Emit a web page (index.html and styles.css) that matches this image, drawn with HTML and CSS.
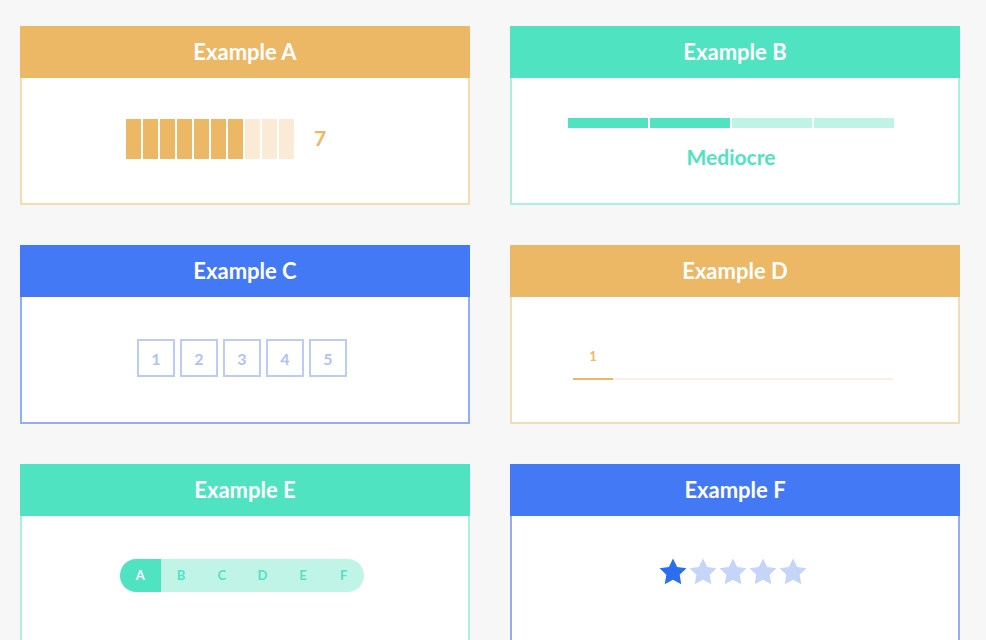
FILE: index.html
```html
<!DOCTYPE html>
<html>
<head>
  <meta charset="utf-8">
  <title>Rating examples</title>
  <link rel="stylesheet" href="styles.css">
</head>
<body>
  <div class="grid">
    <div class="card orange">
      <div class="card-head">Example A</div>
      <div class="card-body">
        <div class="bars">
          <span class="bar on"></span><span class="bar on"></span><span class="bar on"></span><span class="bar on"></span>
          <span class="bar on"></span><span class="bar on"></span><span class="bar on"></span>
          <span class="bar"></span><span class="bar"></span><span class="bar"></span>
        </div>
        <span class="bars-value">7</span>
      </div>
    </div>

    <div class="card teal">
      <div class="card-head">Example B</div>
      <div class="card-body column">
        <div class="segments">
          <span class="seg on"></span><span class="seg on"></span><span class="seg"></span><span class="seg"></span>
        </div>
        <div class="seg-label">Mediocre</div>
      </div>
    </div>

    <div class="card blue">
      <div class="card-head">Example C</div>
      <div class="card-body">
        <div class="boxes">
          <span class="box">1</span><span class="box">2</span><span class="box">3</span><span class="box">4</span><span class="box">5</span>
        </div>
      </div>
    </div>

    <div class="card orange">
      <div class="card-head">Example D</div>
      <div class="card-body">
        <div class="slider">
          <span class="slider-label">1</span>
          <div class="track"><div class="track-fill"></div></div>
        </div>
      </div>
    </div>

    <div class="card teal">
      <div class="card-head">Example E</div>
      <div class="card-body">
        <div class="pill">
          <span class="pill-item on">A</span><span class="pill-item">B</span><span class="pill-item">C</span>
          <span class="pill-item">D</span><span class="pill-item">E</span><span class="pill-item">F</span>
        </div>
      </div>
    </div>

    <div class="card blue">
      <div class="card-head">Example F</div>
      <div class="card-body">
        <div class="stars">
          <svg class="star on" viewBox="0 0 24 24"><path d="M12 1.8l3.1 6.4 7 1-5.1 4.9 1.2 7L12 17.8l-6.2 3.3 1.2-7L1.9 9.2l7-1z"/></svg>
          <svg class="star" viewBox="0 0 24 24"><path d="M12 1.8l3.1 6.4 7 1-5.1 4.9 1.2 7L12 17.8l-6.2 3.3 1.2-7L1.9 9.2l7-1z"/></svg>
          <svg class="star" viewBox="0 0 24 24"><path d="M12 1.8l3.1 6.4 7 1-5.1 4.9 1.2 7L12 17.8l-6.2 3.3 1.2-7L1.9 9.2l7-1z"/></svg>
          <svg class="star" viewBox="0 0 24 24"><path d="M12 1.8l3.1 6.4 7 1-5.1 4.9 1.2 7L12 17.8l-6.2 3.3 1.2-7L1.9 9.2l7-1z"/></svg>
          <svg class="star" viewBox="0 0 24 24"><path d="M12 1.8l3.1 6.4 7 1-5.1 4.9 1.2 7L12 17.8l-6.2 3.3 1.2-7L1.9 9.2l7-1z"/></svg>
        </div>
      </div>
    </div>
  </div>
</body>
</html>
```

FILE: styles.css
```css
* {
  margin: 0;
  padding: 0;
  box-sizing: border-box;
}
body {
  background: #f7f7f7;
  font-family: Lato, "Open Sans", sans-serif;
}
.grid {
  display: grid;
  grid-template-columns: 450px 450px;
  column-gap: 40px;
  row-gap: 40px;
  padding: 26px 0 0 20px;
}

/* card */
.card-head {
  height: 52px;
  line-height: 52px;
  text-align: center;
  color: #fff;
  font-size: 22px;
  font-weight: 700;
}
.card-body {
  height: 127px;
  background: #fff;
  border: 2px solid;
  border-top: 0;
  display: flex;
  align-items: center;
  justify-content: center;
}
.card-body.column {
  flex-direction: column;
  padding-right: 8px;
}
.orange .card-head { background: #edb866; }
.orange .card-body { border-color: #f5dcae; }
.teal .card-head { background: #50e3c2; }
.teal .card-body { border-color: #a9f0e0; }
.blue .card-head { background: #4479f5; }
.blue .card-body { border-color: #8fadf8; }

/* A */
.bars {
  display: flex;
  gap: 2px;
  margin-top: -4px;
}
.bar {
  width: 15px;
  height: 40px;
  background: #fbebd6;
}
.bar.on {
  background: #edb866;
}
.bars-value {
  margin: 0 38px 6px 20px;
  color: #edb866;
  font-size: 21px;
  font-weight: 700;
}

/* B */
.segments {
  display: flex;
  gap: 2px;
  margin-top: 6px;
}
.seg {
  width: 80px;
  height: 10px;
  background: #bff3e6;
}
.seg.on {
  background: #50e3c2;
}
.seg-label {
  margin-top: 16px;
  color: #50e3c2;
  font-size: 21px;
  font-weight: 700;
}

/* C */
.boxes {
  display: flex;
  gap: 5px;
  margin: -3px 6px 0 0;
}
.box {
  width: 38px;
  height: 38px;
  border: 2px solid #bccbf8;
  color: #b0c3f6;
  font-size: 16px;
  font-weight: 700;
  display: flex;
  align-items: center;
  justify-content: center;
}

/* D */
.slider {
  width: 320px;
  margin: 9px 4px 0 0;
}
.slider-label {
  display: block;
  width: 40px;
  text-align: center;
  color: #edb866;
  font-size: 13px;
  font-weight: 700;
  margin-bottom: 14px;
}
.track {
  height: 2px;
  background: #fbefdf;
}
.track-fill {
  width: 40px;
  height: 2px;
  background: #edb866;
}

/* E */
.pill {
  display: flex;
  width: 244px;
  height: 33px;
  border-radius: 17px;
  overflow: hidden;
  background: #c0f4e7;
  margin: -7px 6px 0 0;
}
.pill-item {
  flex: 1;
  display: flex;
  align-items: center;
  justify-content: center;
  color: #50e3c2;
  font-size: 13px;
  font-weight: 700;
}
.pill-item.on {
  background: #50e3c2;
  color: #fff;
}

/* F */
.stars {
  display: flex;
  margin: -13px 6px 0 0;
}
.star {
  width: 32px;
  height: 32px;
  margin-right: -2px;
  fill: #c5d4f9;
}
.star.on {
  fill: #2b6ef0;
}
```
